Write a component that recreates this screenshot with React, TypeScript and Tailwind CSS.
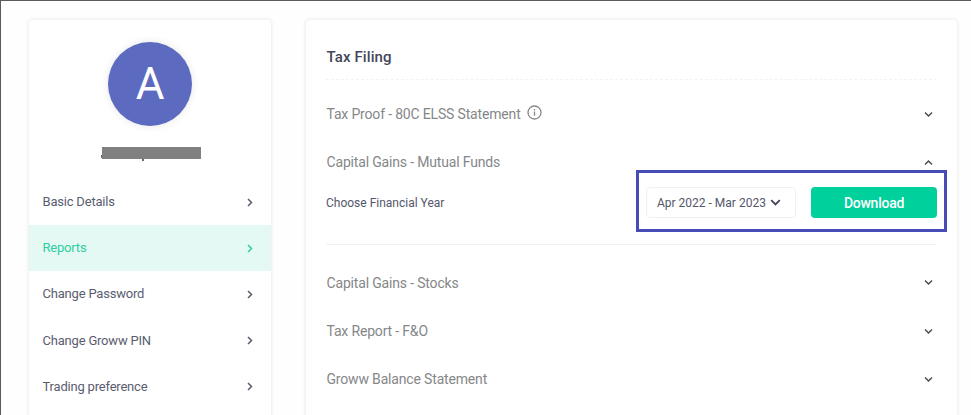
type MenuItem = {
  readonly label: string;
  readonly active?: boolean;
};

type ChevronProps = {
  readonly direction: "up" | "down" | "right";
  readonly className?: string;
};

type ReportRowProps = {
  readonly title: string;
  readonly open?: boolean;
  readonly info?: boolean;
};

const MENU_ITEMS: ReadonlyArray<MenuItem> = [
  { label: "Basic Details" },
  { label: "Reports", active: true },
  { label: "Change Password" },
  { label: "Change Groww PIN" },
  { label: "Trading preference" },
];

const CHEVRON_PATHS = {
  up: "M1 6.5 4.5 3 8 6.5",
  down: "M1 2.5 4.5 6 8 2.5",
  right: "M3 1 6.5 4.5 3 8",
} as const;

function Chevron({ direction, className = "h-[9px] w-[9px]" }: ChevronProps) {
  return (
    <svg viewBox="0 0 9 9" fill="none" className={`shrink-0 ${className}`}>
      <path d={CHEVRON_PATHS[direction]} stroke="currentColor" strokeWidth="1.5" />
    </svg>
  );
}

function InfoIcon() {
  return (
    <svg viewBox="0 0 15 15" fill="none" className="mb-[4px] ml-[6px] h-[15px] w-[15px]">
      <circle cx="7.5" cy="7.5" r="6.5" stroke="currentColor" strokeWidth="1.3" />
      <path d="M7.5 6.6v4.2M7.5 4.1v1.4" stroke="currentColor" strokeWidth="1.3" />
    </svg>
  );
}

function ReportRow({ title, open = false, info = false }: ReportRowProps) {
  return (
    <div className="flex h-[48.3px] items-center justify-between pr-[4px]">
      <div className="flex items-center pl-[0.5px] text-sm tracking-[-0.17px] text-[#858789]">
        <span>{title}</span>
        {info && <InfoIcon />}
      </div>
      <Chevron direction={open ? "up" : "down"} className="h-[9px] w-[9px] text-[#4a4c57]" />
    </div>
  );
}

function Sidebar() {
  return (
    <aside className="h-[440px] w-[242px] shrink-0 rounded-[4px] bg-white shadow-[0_0_4px_rgba(0,0,0,0.12)]">
      <div className="flex h-[159px] flex-col items-center pt-[22px]">
        <div className="flex h-[84px] w-[84px] items-center justify-center rounded-full bg-[#5c6bc0] text-[44px] text-white shadow-[0_0_8px_rgba(0,0,0,0.1)]">
          A
        </div>
        <div className="relative mt-[21px] ml-[3px] h-[12px] w-[99px] bg-[#808080]">
          <span className="absolute bottom-[1px] -left-[1px] h-[3px] w-[1px] bg-[#66686f]" />
          <span className="absolute -bottom-[2px] left-[40px] h-[2px] w-[2px] bg-[#66686f]" />
        </div>
      </div>
      <nav>
        {MENU_ITEMS.map((item) => (
          <a
            key={item.label}
            className={`flex h-[46.1px] items-center justify-between pr-[17px] pl-[13.5px] text-[13px] tracking-[-0.2px] ${
              item.active ? "bg-[#e5f9f4] text-[#2fcf9f]" : "text-[#5a5d6f]"
            }`}
          >
            {item.label}
            <Chevron direction="right" />
          </a>
        ))}
      </nav>
    </aside>
  );
}

function YearPicker() {
  return (
    <div className="flex h-[57px] items-start justify-between">
      <span className="mt-[8px] text-xs leading-4 text-[#54576a]">Choose Financial Year</span>
      <div className="relative flex gap-[15px]">
        <button
          type="button"
          className="flex h-[31px] w-[150px] items-center rounded-[4px] border border-[#f1f1f3] pt-px pl-[10px] text-xs text-[#54576a]"
        >
          Apr 2022 - Mar 2023
          <Chevron direction="down" className="ml-[4px] h-[11px] w-[11px] text-[#44475b]" />
        </button>
        <button
          type="button"
          className="h-[31px] w-[126px] rounded-[4px] bg-[#00d09c] pt-[2px] text-sm font-medium tracking-[-0.25px] text-white"
        >
          Download
        </button>
        <div className="absolute -top-[17px] -right-[10px] h-[62px] w-[311px] border-[3px] border-[#464bb5]" />
      </div>
    </div>
  );
}

export default function App() {
  return (
    <div className="flex h-[415px] gap-[35px] overflow-hidden border-t border-l border-[#5b5b5e] bg-[#fefefe] pt-[19px] pl-[28px] font-['Roboto',sans-serif]">
      <Sidebar />
      <main className="h-[440px] w-[651px] shrink-0 rounded-[4px] bg-white px-[20px] shadow-[0_0_4px_rgba(0,0,0,0.12)]">
        <h1 className="flex h-[60px] items-center border-b border-dashed border-[#f3f3f3] pt-[16px] pl-[0.5px] text-[15px] font-medium tracking-[0.1px] text-[#44475b]">
          Tax Filing
        </h1>
        <div className="pt-[10px]">
          <ReportRow title="Tax Proof - 80C ELSS Statement" info />
          <ReportRow title="Capital Gains - Mutual Funds" open />
          <YearPicker />
        </div>
        <div className="border-t border-[#f1f1f2] pt-[14px]">
          <ReportRow title="Capital Gains - Stocks" />
          <ReportRow title="Tax Report - F&O" />
          <ReportRow title="Groww Balance Statement" />
        </div>
      </main>
    </div>
  );
}
